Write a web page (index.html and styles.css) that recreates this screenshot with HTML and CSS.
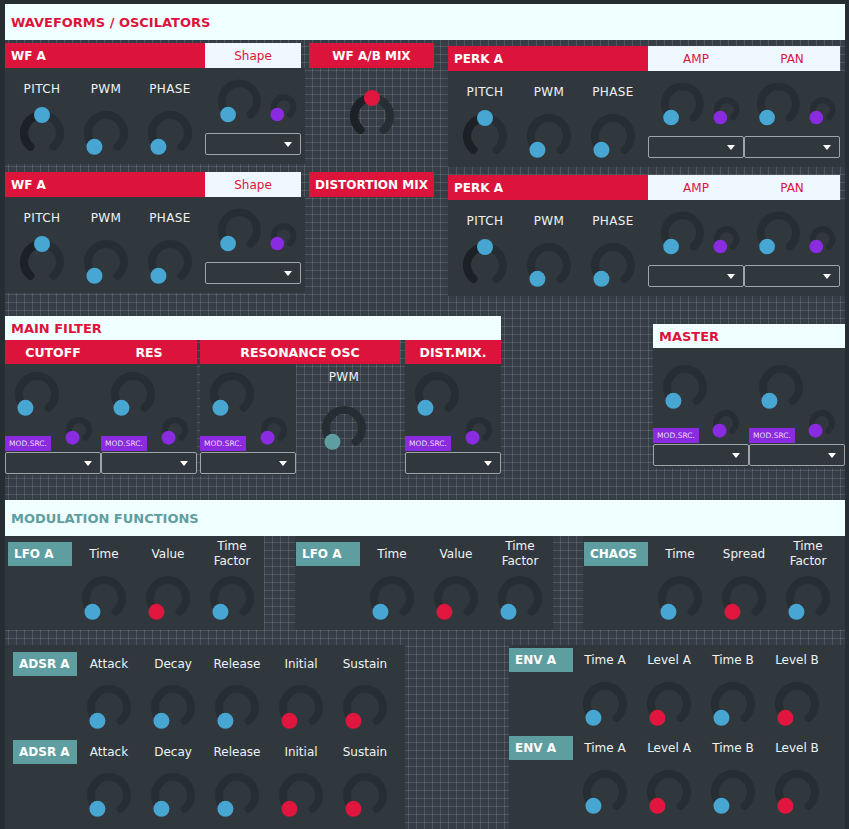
FILE: index.html
```html
<!DOCTYPE html>
<html>
<head>
<meta charset="utf-8">
<link rel="stylesheet" href="styles.css">
</head>
<body>
<svg class="defs" width="0" height="0">
  <defs>
    <symbol id="kb" viewBox="-4 -4 54 54">
      <path d="M11.43 36.79A18 18 0 1 1 34.57 36.79" fill="none" stroke="#272e33" stroke-width="8" stroke-linecap="round"/>
      <circle cx="11.43" cy="36.79" r="8" fill="#47a6d2"/>
    </symbol>
    <symbol id="kr" viewBox="-4 -4 54 54">
      <path d="M11.43 36.79A18 18 0 1 1 34.57 36.79" fill="none" stroke="#272e33" stroke-width="8" stroke-linecap="round"/>
      <circle cx="11.43" cy="36.79" r="8" fill="#e0163f"/>
    </symbol>
    <symbol id="kc" viewBox="-4 -4 54 54">
      <path d="M11.43 36.79A18 18 0 1 1 34.57 36.79" fill="none" stroke="#272e33" stroke-width="8" stroke-linecap="round"/>
      <circle cx="11.43" cy="36.79" r="8" fill="#5f9ea0"/>
    </symbol>
    <symbol id="kbm" viewBox="-4 -4 54 54">
      <path d="M11.43 36.79A18 18 0 1 1 34.57 36.79" fill="none" stroke="#272e33" stroke-width="8" stroke-linecap="round"/>
      <path d="M11.43 36.79A18 18 0 0 1 23 5" fill="none" stroke="#1b2125" stroke-width="8" stroke-linecap="round"/>
      <circle cx="23" cy="5" r="8" fill="#47a6d2"/>
    </symbol>
    <symbol id="krm" viewBox="-4 -4 54 54">
      <path d="M11.43 36.79A18 18 0 1 1 34.57 36.79" fill="none" stroke="#272e33" stroke-width="8" stroke-linecap="round"/>
      <path d="M11.43 36.79A18 18 0 0 1 23 5" fill="none" stroke="#1b2125" stroke-width="8" stroke-linecap="round"/>
      <circle cx="23" cy="5" r="8" fill="#e0163f"/>
    </symbol>
    <symbol id="sp" viewBox="-3 -3 36 36">
      <path d="M8.57 22.66A10 10 0 1 1 21.43 22.66" fill="none" stroke="#272e33" stroke-width="6" stroke-linecap="round"/>
      <circle cx="8.57" cy="22.66" r="7" fill="#8a2be2"/>
    </symbol>
  </defs>
</svg>

<div class="app">
  <div class="stitle red">WAVEFORMS / OSCILATORS</div>

  <div class="osc">
    <div class="wfcol">
      <div class="wf">
        <div class="hrow w296"><div class="hred w200">WF A</div><div class="hwhite w96">Shape</div></div>
        <div class="kbody">
          <div class="kcol"><div class="kl">PITCH</div><svg class="kn"><use href="#kbm"/></svg></div>
          <div class="kcol"><div class="kl">PWM</div><svg class="kn"><use href="#kb"/></svg></div>
          <div class="kcol"><div class="kl">PHASE</div><svg class="kn"><use href="#kb"/></svg></div>
          <div class="sg"><div class="sgk"><svg class="kn"><use href="#kb"/></svg><svg class="ks"><use href="#sp"/></svg></div><div class="dd"></div></div>
        </div>
      </div>
      <div class="wf gap8">
        <div class="hrow w296"><div class="hred w200">WF A</div><div class="hwhite w96">Shape</div></div>
        <div class="kbody">
          <div class="kcol"><div class="kl">PITCH</div><svg class="kn"><use href="#kbm"/></svg></div>
          <div class="kcol"><div class="kl">PWM</div><svg class="kn"><use href="#kb"/></svg></div>
          <div class="kcol"><div class="kl">PHASE</div><svg class="kn"><use href="#kb"/></svg></div>
          <div class="sg"><div class="sgk"><svg class="kn"><use href="#kb"/></svg><svg class="ks"><use href="#sp"/></svg></div><div class="dd"></div></div>
        </div>
      </div>
    </div>

    <div class="mixcol">
      <div class="mix"><div class="hred ctr">WF A/B MIX</div><svg class="kn mk"><use href="#krm"/></svg></div>
      <div class="mix gap8"><div class="hred ctr">DISTORTION MIX</div></div>
    </div>

    <div class="perkcol">
      <div class="perk">
        <div class="hrow w392"><div class="hred w200">PERK A</div><div class="hwhite w96">AMP</div><div class="hwhite w96">PAN</div></div>
        <div class="kbody">
          <div class="kcol"><div class="kl">PITCH</div><svg class="kn"><use href="#kbm"/></svg></div>
          <div class="kcol"><div class="kl">PWM</div><svg class="kn"><use href="#kb"/></svg></div>
          <div class="kcol"><div class="kl">PHASE</div><svg class="kn"><use href="#kb"/></svg></div>
          <div class="sg"><div class="sgk"><svg class="kn"><use href="#kb"/></svg><svg class="ks"><use href="#sp"/></svg></div><div class="dd"></div></div>
          <div class="sg sg2"><div class="sgk"><svg class="kn"><use href="#kb"/></svg><svg class="ks"><use href="#sp"/></svg></div><div class="dd"></div></div>
        </div>
      </div>
      <div class="perk gap8">
        <div class="hrow w392"><div class="hred w200">PERK A</div><div class="hwhite w96">AMP</div><div class="hwhite w96">PAN</div></div>
        <div class="kbody">
          <div class="kcol"><div class="kl">PITCH</div><svg class="kn"><use href="#kbm"/></svg></div>
          <div class="kcol"><div class="kl">PWM</div><svg class="kn"><use href="#kb"/></svg></div>
          <div class="kcol"><div class="kl">PHASE</div><svg class="kn"><use href="#kb"/></svg></div>
          <div class="sg"><div class="sgk"><svg class="kn"><use href="#kb"/></svg><svg class="ks"><use href="#sp"/></svg></div><div class="dd"></div></div>
          <div class="sg sg2"><div class="sgk"><svg class="kn"><use href="#kb"/></svg><svg class="ks"><use href="#sp"/></svg></div><div class="dd"></div></div>
        </div>
      </div>
    </div>
  </div>

  <div class="filterarea">
    <div class="filter">
      <div class="btitle red">MAIN FILTER</div>
      <div class="fh">
        <div class="hred fhs w192"><span>CUTOFF</span><span>RES</span></div>
        <div class="hred fhs w200 ctr ml3">RESONANCE OSC</div>
        <div class="hred fhs w96 ctr ml5">DIST.MIX.</div>
      </div>
      <div class="fb">
        <div class="fcol"><svg class="kn bk"><use href="#kb"/></svg><div class="modrow"><div class="msrc">MOD.SRC.</div><svg class="ks"><use href="#sp"/></svg></div><div class="dd"></div></div>
        <div class="fcol"><svg class="kn bk"><use href="#kb"/></svg><div class="modrow"><div class="msrc">MOD.SRC.</div><svg class="ks"><use href="#sp"/></svg></div><div class="dd"></div></div>
        <div class="fcol ml3"><svg class="kn bk"><use href="#kb"/></svg><div class="modrow"><div class="msrc">MOD.SRC.</div><svg class="ks"><use href="#sp"/></svg></div><div class="dd"></div></div>
        <div class="pcol"><div class="kl">PWM</div><svg class="kn"><use href="#kc"/></svg></div>
        <div class="fcol ml5"><svg class="kn bk"><use href="#kb"/></svg><div class="modrow"><div class="msrc">MOD.SRC.</div><svg class="ks"><use href="#sp"/></svg></div><div class="dd"></div></div>
      </div>
    </div>
    <div class="master">
      <div class="btitle red">MASTER</div>
      <div class="mb">
        <div class="fcol mcol"><svg class="kn bk"><use href="#kb"/></svg><div class="modrow"><div class="msrc">MOD.SRC.</div><svg class="ks"><use href="#sp"/></svg></div><div class="dd"></div></div>
        <div class="fcol mcol"><svg class="kn bk"><use href="#kb"/></svg><div class="modrow"><div class="msrc">MOD.SRC.</div><svg class="ks"><use href="#sp"/></svg></div><div class="dd"></div></div>
      </div>
    </div>
  </div>

  <div class="stitle teal">MODULATION FUNCTIONS</div>

  <div class="lforow">
    <div class="lfo l1">
      <div class="tl">LFO A</div>
      <div class="mc"><div class="ml">Time</div><svg class="kn"><use href="#kb"/></svg></div>
      <div class="mc"><div class="ml">Value</div><svg class="kn"><use href="#kr"/></svg></div>
      <div class="mc"><div class="ml">Time<br>Factor</div><svg class="kn"><use href="#kb"/></svg></div>
    </div>
    <div class="lfo l2">
      <div class="tl">LFO A</div>
      <div class="mc"><div class="ml">Time</div><svg class="kn"><use href="#kb"/></svg></div>
      <div class="mc"><div class="ml">Value</div><svg class="kn"><use href="#kr"/></svg></div>
      <div class="mc"><div class="ml">Time<br>Factor</div><svg class="kn"><use href="#kb"/></svg></div>
    </div>
    <div class="lfo l3">
      <div class="tl">CHAOS</div>
      <div class="mc"><div class="ml">Time</div><svg class="kn"><use href="#kb"/></svg></div>
      <div class="mc"><div class="ml">Spread</div><svg class="kn"><use href="#kr"/></svg></div>
      <div class="mc"><div class="ml">Time<br>Factor</div><svg class="kn"><use href="#kb"/></svg></div>
    </div>
  </div>

  <div class="envarea">
    <div class="adsr">
      <div class="arow">
        <div class="tl">ADSR A</div>
        <div class="ac"><div class="al">Attack</div><svg class="kn"><use href="#kb"/></svg></div>
        <div class="ac"><div class="al">Decay</div><svg class="kn"><use href="#kb"/></svg></div>
        <div class="ac"><div class="al">Release</div><svg class="kn"><use href="#kb"/></svg></div>
        <div class="ac"><div class="al">Initial</div><svg class="kn"><use href="#kr"/></svg></div>
        <div class="ac"><div class="al">Sustain</div><svg class="kn"><use href="#kr"/></svg></div>
      </div>
      <div class="arow">
        <div class="tl">ADSR A</div>
        <div class="ac"><div class="al">Attack</div><svg class="kn"><use href="#kb"/></svg></div>
        <div class="ac"><div class="al">Decay</div><svg class="kn"><use href="#kb"/></svg></div>
        <div class="ac"><div class="al">Release</div><svg class="kn"><use href="#kb"/></svg></div>
        <div class="ac"><div class="al">Initial</div><svg class="kn"><use href="#kr"/></svg></div>
        <div class="ac"><div class="al">Sustain</div><svg class="kn"><use href="#kr"/></svg></div>
      </div>
    </div>
    <div class="env">
      <div class="arow">
        <div class="tl">ENV A</div>
        <div class="ac"><div class="al">Time A</div><svg class="kn"><use href="#kb"/></svg></div>
        <div class="ac"><div class="al">Level A</div><svg class="kn"><use href="#kr"/></svg></div>
        <div class="ac"><div class="al">Time B</div><svg class="kn"><use href="#kb"/></svg></div>
        <div class="ac"><div class="al">Level B</div><svg class="kn"><use href="#kr"/></svg></div>
      </div>
      <div class="arow">
        <div class="tl">ENV A</div>
        <div class="ac"><div class="al">Time A</div><svg class="kn"><use href="#kb"/></svg></div>
        <div class="ac"><div class="al">Level A</div><svg class="kn"><use href="#kr"/></svg></div>
        <div class="ac"><div class="al">Time B</div><svg class="kn"><use href="#kb"/></svg></div>
        <div class="ac"><div class="al">Level B</div><svg class="kn"><use href="#kr"/></svg></div>
      </div>
    </div>
  </div>
</div>
</body>
</html>
```

FILE: styles.css
```css
* { box-sizing: border-box; margin: 0; padding: 0; }
html, body { background: #262d33; }
body {
  width: 849px;
  height: 829px;
  overflow: hidden;
  font-family: "DejaVu Sans", Verdana, sans-serif;
  color: #eef3f5;
  font-size: 12px;
}
.defs { display: block; width: 0; height: 0; overflow: hidden; }

.app {
  margin: 4px 0 0 5px;
  width: 840px;
  height: 825px;
  background-color: #353e46;
  background-image:
    linear-gradient(to right, rgba(255,255,255,0.12) 1px, transparent 1px),
    linear-gradient(to bottom, rgba(255,255,255,0.12) 1px, transparent 1px);
  background-size: 8px 8px;
  background-position: 3px 2px;
}

.stitle {
  height: 36px;
  background: #f0ffff;
  font-weight: bold;
  font-size: 13px;
  padding-left: 6px;
  display: flex;
  align-items: center;
}
.btitle {
  height: 24px;
  background: #f0ffff;
  font-weight: bold;
  font-size: 13px;
  padding-left: 6px;
  display: flex;
  align-items: center;
}
.red { color: #dc143c; }
.teal { color: #5f9ea0; }

.hrow { display: flex; height: 25px; }
.w296 { width: 296px; }
.w392 { width: 392px; }
.w200 { width: 200px; }
.w192 { width: 192px; }
.w96 { width: 96px; }
.ml3 { margin-left: 3px; }
.ml5 { margin-left: 5px; }
.gap8 { margin-top: 8px; }

.hred {
  background: #dc143c;
  color: #fff;
  font-weight: bold;
  font-size: 12px;
  height: 25px;
  display: flex;
  align-items: center;
  padding-left: 6px;
}
.hred.ctr { justify-content: center; padding-left: 0; }
.hwhite {
  background: #f0f8ff;
  color: #dc143c;
  font-size: 12px;
  display: flex;
  align-items: center;
  justify-content: center;
}

/* knobs */
.kn { display: block; width: 54px; height: 54px; }
.ks { display: block; width: 36px; height: 36px; }

/* oscillator area */
.osc { display: flex; align-items: flex-start; margin-top: 3px; height: 253px; }
.wfcol { width: 300px; }
.wf { width: 300px; height: 121px; }
.mixcol { width: 125px; margin-left: 4px; }
.mix { height: 121px; }
.mk { margin: 21px auto 0; }
.perkcol { width: 397px; margin-left: 14px; margin-top: 3px; }
.perk { width: 397px; height: 121px; }

.kbody {
  display: flex;
  height: 96px;
  padding-left: 5px;
  background: #30383e;
}
.kcol { width: 64px; display: flex; flex-direction: column; align-items: center; }
.kl { margin-top: 13px; line-height: 16px; font-size: 12px; letter-spacing: 0.4px; }
.kcol .kn { margin-top: 9px; }
.sg { width: 96px; margin-left: 3px; }
.sg2 { margin-left: 0; }
.sgk { display: flex; align-items: flex-start; height: 65px; padding: 6px 0 0 8px; }
.sgk .ks { margin-top: 15px; }

.dd {
  height: 22px;
  width: 96px;
  border: 1px solid #9ea5aa;
  border-radius: 2px;
  display: flex;
  align-items: center;
  justify-content: flex-end;
  padding-right: 8px;
}
.dd::after {
  content: "";
  border-left: 4px solid transparent;
  border-right: 4px solid transparent;
  border-top: 5px solid #ffffff;
}

/* filter area */
.filterarea { display: flex; align-items: flex-start; margin-top: 20px; height: 159px; }
.filter { width: 496px; }
.fh { display: flex; height: 24px; }
.fhs { height: 24px; font-size: 12.5px; }
.fhs span { width: 96px; text-align: center; }
.hred.w192 { padding-left: 0; }
.fb { display: flex; height: 111px; }
.fcol { width: 96px; display: flex; flex-direction: column; background: #30383e; }
.bk { margin: 3px 0 0 5px; }
.modrow { display: flex; align-items: flex-start; margin-top: -9px; height: 39px; }
.msrc {
  width: 46px;
  height: 15px;
  margin-top: 24px;
  background: #8a2be2;
  color: #eadcf7;
  font-size: 7.5px;
  line-height: 15px;
  text-align: center;
}
.modrow .ks { margin-left: 10px; }
.modrow + .dd { margin-top: 1px; }
.pcol { width: 104px; display: flex; flex-direction: column; align-items: center; padding-right: 8px; }
.pcol .kl { margin-top: 5px; }
.pcol .kn { margin-top: 16px; }

.master { width: 192px; margin-left: 152px; margin-top: 8px; }
.mb { display: flex; height: 120px; background: #30383e; }
.mcol .bk { margin-top: 12px; }
.mcol .modrow { height: 38px; }
.mcol .msrc { margin-top: 23px; }
.mcol .modrow .ks { margin-left: 9px; }

/* modulation */
.teal.stitle { margin-top: 25px; }
.lforow { display: flex; height: 94px; }
.lfo { display: flex; background: #30383e; height: 94px; }
.l1 { width: 259px; padding-left: 3px; }
.l2 { width: 258px; padding-left: 1px; margin-left: 31px; }
.l3 { width: 262px; padding-left: 1px; margin-left: 30px; }
.tl {
  width: 64px;
  height: 24px;
  margin-top: 6px;
  background: #5f9ea0;
  color: #fff;
  font-weight: bold;
  font-size: 12px;
  line-height: 24px;
  padding-left: 6px;
  flex-shrink: 0;
}
.mc { width: 64px; display: flex; flex-direction: column; align-items: center; }
.ml {
  height: 30px;
  margin-top: 3px;
  display: flex;
  align-items: center;
  text-align: center;
  line-height: 15px;
  font-size: 12px;
}
.mc .kn { margin-top: 2px; }

.envarea { display: flex; margin-top: 15px; height: 184px; }
.adsr { width: 400px; height: 184px; padding: 7px 0 0 8px; background: #30383e; }
.env { width: 336px; height: 184px; margin-left: 104px; padding-top: 3px; background: #30383e; }
.arow { display: flex; height: 88px; }
.arow .tl { margin-top: 0; }
.ac { width: 64px; display: flex; flex-direction: column; align-items: center; }
.al { line-height: 24px; font-size: 12px; }
.adsr .ac .kn { margin-top: 4px; }
.env .ac .kn { margin-top: 5px; }
```
